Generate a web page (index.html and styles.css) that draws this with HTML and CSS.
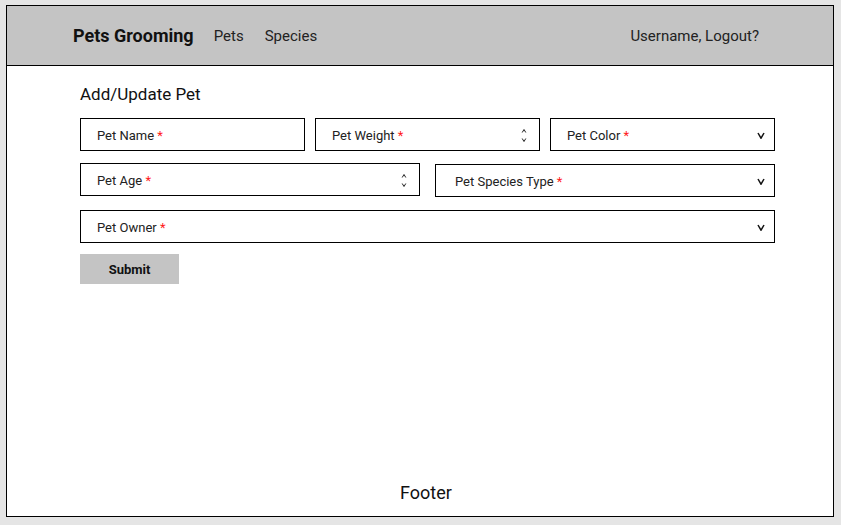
FILE: index.html
```html
<!DOCTYPE html>
<html>
<head>
<meta charset="utf-8">
<link rel="stylesheet" href="styles.css">
</head>
<body>
<div class="frame">
  <header class="topbar">
    <div class="brand">Pets Grooming</div>
    <nav class="nav">
      <a class="nav-link">Pets</a>
      <a class="nav-link">Species</a>
    </nav>
    <div class="user">Username, Logout?</div>
  </header>
  <main class="content">
    <h1 class="title">Add/Update Pet</h1>
    <div class="row row-3">
      <div class="field"><span class="label">Pet Name <span class="req">*</span></span></div>
      <div class="field"><span class="label">Pet Weight <span class="req">*</span></span>
        <svg class="spin" width="6" height="15" viewBox="0 0 6 15"><path d="M1.2 4.5 L3 1.5 L4.8 4.5 M1.2 10.5 L3 13.5 L4.8 10.5" fill="none" stroke="#222" stroke-width="1"/></svg>
      </div>
      <div class="field"><span class="label">Pet Color <span class="req">*</span></span>
        <svg class="chev" width="8" height="7" viewBox="0 0 8 7"><path d="M1 1 L4 6.2 L7 1" fill="none" stroke="#111" stroke-width="1.5"/></svg>
      </div>
    </div>
    <div class="row row-2">
      <div class="field"><span class="label">Pet Age <span class="req">*</span></span>
        <svg class="spin" width="6" height="15" viewBox="0 0 6 15"><path d="M1.2 4.5 L3 1.5 L4.8 4.5 M1.2 10.5 L3 13.5 L4.8 10.5" fill="none" stroke="#222" stroke-width="1"/></svg>
      </div>
      <div class="field field-offset"><span class="label">Pet Species Type <span class="req">*</span></span>
        <svg class="chev" width="8" height="7" viewBox="0 0 8 7"><path d="M1 1 L4 6.2 L7 1" fill="none" stroke="#111" stroke-width="1.5"/></svg>
      </div>
    </div>
    <div class="row row-1">
      <div class="field"><span class="label">Pet Owner <span class="req">*</span></span>
        <svg class="chev" width="8" height="7" viewBox="0 0 8 7"><path d="M1 1 L4 6.2 L7 1" fill="none" stroke="#111" stroke-width="1.5"/></svg>
      </div>
    </div>
    <button class="submit">Submit</button>
  </main>
  <footer class="footer">Footer</footer>
</div>
</body>
</html>
```

FILE: styles.css
```css
* { box-sizing: border-box; }
html, body { margin: 0; padding: 0; }
body {
  background: #e5e5e5;
  font-family: Roboto, "Liberation Sans", sans-serif;
  color: #111;
  width: 841px;
  height: 525px;
  padding: 5px 0 0 6px;
}
.frame {
  width: 828px;
  height: 512px;
  border: 1px solid #000;
  background: #fff;
  display: flex;
  flex-direction: column;
}
.topbar {
  height: 60px;
  flex: none;
  background: #c4c4c4;
  border-bottom: 1px solid #000;
  display: flex;
  align-items: center;
  padding: 0 74px 0 66px;
}
.brand {
  font-weight: 700;
  font-size: 18px;
  color: #111;
  margin-right: 20px;
}
.nav { display: flex; gap: 21px; flex: 1; }
.nav-link { font-size: 15px; color: #222; }
.user { font-size: 15px; color: #222; }
.content {
  flex: 1;
  padding: 18px 58px 0 73px;
}
.title {
  margin: 0 0 14px;
  font-size: 17px;
  font-weight: 400;
  line-height: 20px;
  color: #111;
}
.row { display: grid; margin-bottom: 12px; }
.row-3 { grid-template-columns: repeat(3, 1fr); gap: 10px; }
.row-2 { grid-template-columns: repeat(2, 1fr); gap: 15px; margin-bottom: 13px; }
.row-1 { grid-template-columns: 1fr; margin-bottom: 11px; }
.field {
  height: 33px;
  border: 1px solid #000;
  display: flex;
  align-items: center;
  padding: 1px 11px 0 16px;
  font-size: 13px;
  color: #222;
}
.field-offset { margin-top: 1px; padding-left: 19px; }
.label { flex: 1; }
.req { color: #ff1a1a; }
.spin { margin-right: 1px; display: block; }
.chev { margin-right: -2px; display: block; }
.submit {
  display: block;
  width: 99px;
  height: 30px;
  background: #c4c4c4;
  border: none;
  font-family: Roboto, "Liberation Sans", sans-serif;
  font-weight: 700;
  font-size: 13px;
  color: #111;
  padding: 0;
}
.footer {
  height: 40px;
  flex: none;
  padding: 0 58px 8px 70px;
  display: flex;
  align-items: center;
  justify-content: center;
  font-size: 18px;
  color: #111;
}
```
